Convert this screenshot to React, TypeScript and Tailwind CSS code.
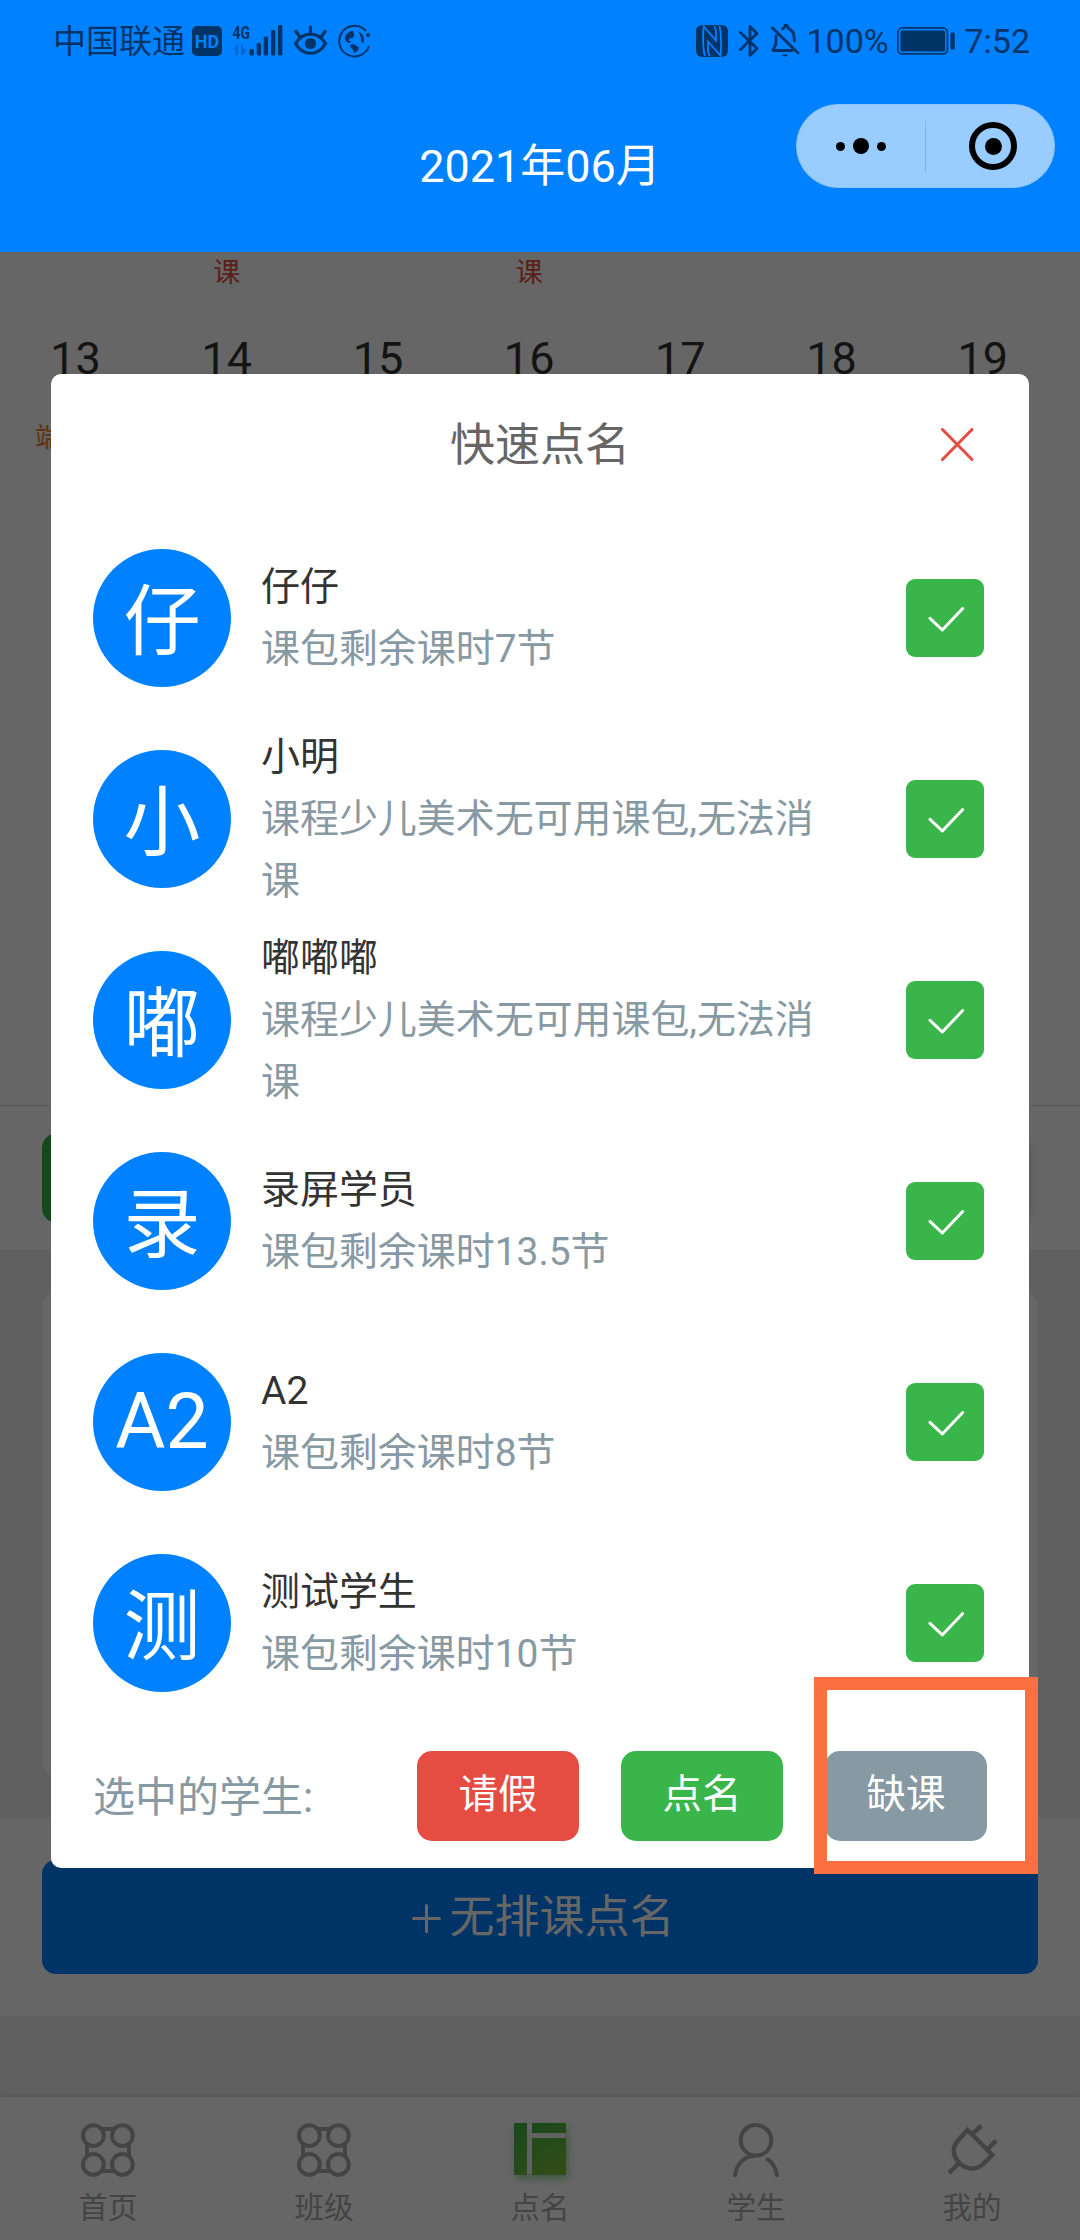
import { useState, type ReactNode } from "react";
import clsx from "clsx";

interface Student {
  id: number;
  avatar: string;
  name: string;
  note: string;
}

const students: Student[] = [
  { id: 1, avatar: "仔", name: "仔仔", note: "课包剩余课时7节" },
  { id: 2, avatar: "小", name: "小明", note: "课程少儿美术无可用课包,无法消课" },
  { id: 3, avatar: "嘟", name: "嘟嘟嘟", note: "课程少儿美术无可用课包,无法消课" },
  { id: 4, avatar: "录", name: "录屏学员", note: "课包剩余课时13.5节" },
  { id: 5, avatar: "A2", name: "A2", note: "课包剩余课时8节" },
  { id: 6, avatar: "测", name: "测试学生", note: "课包剩余课时10节" },
];

const days = [
  { day: 13, above: "", below: "端午节" },
  { day: 14, above: "课", below: "" },
  { day: 15, above: "", below: "" },
  { day: 16, above: "课", below: "" },
  { day: 17, above: "", below: "" },
  { day: 18, above: "", below: "" },
  { day: 19, above: "", below: "" },
];

function StatusBar() {
  return (
    <div className="flex h-[82px] items-center pl-[53px] pr-[50px] text-[#003366]">
      <span className="pt-[2px] text-[33px] leading-[40px]">中国联通</span>
      <span className="ml-[7px] flex h-[30px] w-[30px] items-center justify-center rounded-[5px] bg-[#003366] text-[18px] font-bold text-[#0081ff]">
        HD
      </span>
      <svg className="ml-[10px] overflow-visible" width="52" height="42" viewBox="232 20 52 42" fill="currentColor">
        <text x="232.5" y="38.5" fontSize="19" fontWeight="700" textLength="17.5" lengthAdjust="spacingAndGlyphs">
          4G
        </text>
        <path d="M233 50l5-6v11h-2.500v-5zM241 44h2v5h4.500l-5 6H241z" opacity="0.3" />
        <rect x="249.500" y="49" width="4.500" height="6.500" rx="1.500" />
        <rect x="256.700" y="43" width="4.300" height="12.500" rx="1.500" />
        <rect x="263.700" y="36.500" width="4.300" height="19" rx="1.500" />
        <rect x="271" y="30" width="4.300" height="25.500" rx="1.500" />
        <rect x="278" y="25" width="4.300" height="30.500" rx="1.500" />
      </svg>
      <svg className="ml-[10px]" width="34" height="34" viewBox="294 24 34 34" fill="none" stroke="currentColor" strokeWidth="3.200" strokeLinecap="round">
        <path d="M295.500 43.500C303 31 318 31 325.500 43.500C318 56.500 303 56.500 295.500 43.500Z" />
        <path d="M310.500 27v6M296 31.500l3.500 5M325 31.500l-3.500 5" />
        <circle cx="310.500" cy="43.500" r="5.600" fill="currentColor" stroke="none" />
      </svg>
      <svg className="ml-[9px]" width="34" height="34" viewBox="337 24 34 34" fill="none">
        <path d="M366 31A15.300 15.300 0 1 0 369 46" stroke="currentColor" strokeWidth="1.900" />
        <circle cx="368" cy="35" r="2" fill="currentColor" />
        <path
          d="M353 31c-4 0-7 2.500-8 6.500-.5 2 1 3 1.500 4.500l3 1 1.500-2h-2c-.5-2 .5-3 2-3l1 1c1-2 1.500-2.500 2.500-3zM358 31.500c4 1.500 6.500 5 6 9.500-.5 2-1.500 2.500-2.500 1-.5-4-1-8-3.500-10.500zM350 45c1.500-1.500 3.500-1.300 5 0l3.500 2c.5 3-1.500 5-4.500 6-1-1-.5-3-1.500-4s-2.500-2-2.500-4z"
          fill="currentColor"
        />
      </svg>
      <div className="flex-1" />
      <svg width="32" height="32" viewBox="0 0 32 32" fill="none">
        <rect width="32" height="32" rx="6" fill="currentColor" />
        <path d="M9 31C7 26 6.500 10 7.800 1.500L20 15.500V7c0-2.500-.7-4.500-1.800-6M23.200 1c2 5 2.500 21 1.200 29.500L12 16.500V25c0 2.500.7 4.500 1.800 6" stroke="#0081ff" strokeWidth="1.800" />
      </svg>
      <svg className="ml-[11px]" width="20" height="34" viewBox="0 0 20 34" fill="none" stroke="currentColor" strokeWidth="2.800" strokeLinejoin="round" strokeLinecap="round">
        <path d="M1.500 8.500L18 24.500L11 31.500V2.500L18 9.500L1.500 25.500" />
      </svg>
      <svg className="ml-[12px]" width="30" height="34" viewBox="772 24 30 34" fill="none" stroke="currentColor" strokeWidth="2.800" strokeLinecap="round">
        <path d="M773.500 28L799 53M774 50.500H793M777 36v8l-3 6M783.500 29c2-1.500 3-3 2.800-3.700 3-.5 2 2.500 4 3.700 4 2 5 5 5 12" />
        <path d="M783 54.500h6c-1 2.500-5 2.500-6 0z" fill="currentColor" stroke="none" />
      </svg>
      <span className="ml-[5px] w-[82px] text-[34px] leading-[40px]">100%</span>
      <svg className="ml-[9px]" width="59" height="28" viewBox="0 0 59 28" fill="none">
        <rect x="0.900" y="0.900" width="49.500" height="26" rx="4.500" stroke="currentColor" strokeWidth="1.600" />
        <rect x="3.500" y="3.500" width="44.500" height="21" rx="1.500" fill="currentColor" />
        <rect x="53.500" y="5.500" width="4.300" height="17" rx="1.500" fill="currentColor" />
      </svg>
      <span className="ml-[8px] text-[34px] leading-[40px]">7:52</span>
    </div>
  );
}

function Capsule() {
  return (
    <div className="absolute right-[25px] top-[104px] flex h-[84px] w-[259px] items-center rounded-full border border-[#8cc4fa] bg-[#99cdff]">
      <div className="flex w-[128px] items-center justify-center gap-2">
        <span className="h-[9px] w-[9px] rounded-full bg-black" />
        <span className="h-4 w-4 rounded-full bg-black" />
        <span className="h-[9px] w-[9px] rounded-full bg-black" />
      </div>
      <div className="h-[51px] w-px bg-[#7ab5ee]" />
      <div className="flex flex-1 items-center justify-center pl-[6px]">
        <span className="flex h-12 w-12 items-center justify-center rounded-full border-[6px] border-black">
          <span className="h-[17px] w-[17px] rounded-full bg-black" />
        </span>
      </div>
    </div>
  );
}

function DroneIcon() {
  return (
    <svg width="54" height="54" viewBox="0 0 54 54" fill="none" stroke="#aaaaaa" strokeWidth="4">
      <circle cx="12.400" cy="12.600" r="10.400" />
      <circle cx="41.400" cy="12.600" r="10.400" />
      <circle cx="12.400" cy="41.400" r="10.400" />
      <circle cx="41.400" cy="41.400" r="10.400" />
      <path d="M21 6h12M21 48h12M6 21v12M48 21v12" />
    </svg>
  );
}

function BookIcon() {
  return (
    <svg width="72" height="72" viewBox="-10 -9 72 72" className="drop-shadow-[2px_4px_4px_rgba(57,181,74,0.5)]">
      <defs>
        <linearGradient id="book" x1="0" y1="0" x2="30" y2="56" gradientUnits="userSpaceOnUse">
          <stop offset="0" stopColor="#39b54a" />
          <stop offset="1" stopColor="#7fbf3a" />
        </linearGradient>
      </defs>
      <rect x="1" y="1" width="50" height="50" fill="#ffffff" opacity="0.800" />
      <path d="M1 0H13V52H1Q0 52 0 51V1Q0 0 1 0ZM18 0H51Q52 0 52 1V10H18ZM18 15H52V51Q52 52 51 52H18Z" fill="url(#book)" />
    </svg>
  );
}

function PersonIcon() {
  return (
    <svg width="54" height="54" viewBox="729 2123 54 54" fill="none" stroke="#aaaaaa" strokeWidth="4" strokeLinecap="round">
      <circle cx="756" cy="2140.300" r="15.300" />
      <path d="M735 2175C737 2163 745 2156 754 2156M767.500 2159.300C772.500 2162.500 775.500 2167 777 2175" />
    </svg>
  );
}

function PlugIcon() {
  return (
    <svg width="54" height="54" viewBox="945 2123 54 54" fill="none" stroke="#aaaaaa" strokeWidth="4.500">
      <path d="M967.500 2130L957.500 2141C952.500 2147 952.500 2154.500 958 2161.500C964.500 2169 974 2170.500 981.500 2165.500L992.300 2155Z" />
      <path d="M971.500 2134.500L981.300 2125.800M986.500 2150.500L996 2140.500M958.500 2163.500L949 2173" />
    </svg>
  );
}

const tabs: { label: string; icon: ReactNode }[] = [
  { label: "首页", icon: <DroneIcon /> },
  { label: "班级", icon: <DroneIcon /> },
  { label: "点名", icon: <BookIcon /> },
  { label: "学生", icon: <PersonIcon /> },
  { label: "我的", icon: <PlugIcon /> },
];

function PageContent() {
  return (
    <div className="flex h-[1988px] flex-col bg-[#f1f1f1]">
      <div className="h-[853px] shrink-0 bg-white">
        <div className="flex">
          {days.map((d) => (
            <div key={d.day} className="flex w-[151.2px] flex-col items-center">
              <span className="mt-[1px] h-[40px] text-[27px] leading-[40px] text-[#e54d42]">{d.above}</span>
              <span className="mt-[36px] text-[45px] leading-[60px] text-[#333333]">{d.day}</span>
              <span className="mt-[29px] h-[40px] text-[27px] leading-[40px] whitespace-nowrap text-[#f37b1d]">{d.below}</span>
            </div>
          ))}
        </div>
      </div>
      <div className="flex h-[145px] shrink-0 justify-between border-t border-[#e2e2e2] bg-white pt-[27px] pr-[52px] pl-[42px]">
        <div className="h-[90px] w-[162px] rounded-[15px] bg-[#39b54a]" />
        <div className="h-[90px] w-[162px] rounded-[15px] bg-white shadow-[3px_3px_6px_rgba(28,90,37,0.2)]" />
      </div>
      <div className="flex h-[568px] shrink-0 px-[42px] pt-[42px] pb-[42px]">
        <div className="flex-1 rounded-[15px] bg-white" />
      </div>
      <div className="h-[198px] shrink-0 bg-white px-[42px] pt-[42px]">
        <button className="flex h-[114px] w-full items-center justify-center gap-[8px] rounded-[14px] bg-[#0081ff] pt-[2px] pl-[7px] text-[45px] leading-[60px] text-white">
          <svg width="29" height="29" viewBox="0 0 29 29" stroke="currentColor" strokeWidth="3" strokeLinecap="round">
            <path d="M1.500 14.500h26M14.500 1.500v26" />
          </svg>
          <span>无排课点名</span>
        </button>
      </div>
      <div className="flex-1" />
      <nav className="flex h-[143px] shrink-0 bg-white shadow-[0_-1px_8px_rgba(0,0,0,0.12)]">
        {tabs.map((tab) => (
          <div key={tab.label} className="flex flex-1 flex-col items-center pt-[26px]">
            <div className="flex h-[54px] w-[54px] items-center justify-center">
              <div className="shrink-0">{tab.icon}</div>
            </div>
            <span className="mt-[11px] text-[29.5px] leading-[40px] text-[#aaaaaa]">{tab.label}</span>
          </div>
        ))}
      </nav>
    </div>
  );
}

function StudentRow({ student, checked, onToggle }: { student: Student; checked: boolean; onToggle: () => void }) {
  const isLatin = /^[\x20-\x7e]+$/.test(student.avatar);
  return (
    <div className="flex h-[201px] items-center pl-[42px] pr-[45px]">
      <div
        className={clsx(
          "flex h-[138px] w-[138px] shrink-0 items-center justify-center rounded-full bg-[#0081ff] text-[77px] leading-[100px] text-white",
          !isLatin && "pt-[10px]"
        )}
      >
        {student.avatar}
      </div>
      <div className="ml-[30px] w-[560px] text-[38.95px] leading-[62px]">
        <div className="text-[#333333]">{student.name}</div>
        <div className="text-[#8799a3]">{student.note}</div>
      </div>
      <button
        onClick={onToggle}
        className={clsx(
          "ml-auto flex h-[78px] w-[78px] items-center justify-center rounded-[9px]",
          checked ? "bg-[#39b54a]" : "border-2 border-[#8799a3]"
        )}
      >
        <svg width="78" height="78" viewBox="0 0 78 78" fill="none" stroke="white" strokeWidth="3" strokeLinecap="round" strokeLinejoin="round">
          <path d="M24 39.300L36.300 51L56.700 29.500" />
        </svg>
      </button>
    </div>
  );
}

function RollCallDialog() {
  const [selected, setSelected] = useState(students.map((s) => s.id));

  const toggle = (id: number) =>
    setSelected((prev) => (prev.includes(id) ? prev.filter((x) => x !== id) : [...prev, id]));

  return (
    <div className="relative flex h-[1494px] w-[978px] flex-col rounded-[10px] bg-white">
      <div className="grid h-[143px] shrink-0 grid-cols-[1fr_auto_1fr] items-center px-[55px]">
        <span />
        <h2 className="text-[45px] leading-[60px] text-[#666666]">快速点名</h2>
        <svg className="mb-[2px] justify-self-end" width="33" height="33" viewBox="0 0 33 33" stroke="#e54d42" strokeWidth="3" strokeLinecap="round">
          <path d="M1.500 1.500L31 31.500M31 1.500L1.500 31.500" />
        </svg>
      </div>
      {students.map((s) => (
        <StudentRow key={s.id} student={s} checked={selected.includes(s.id)} onToggle={() => toggle(s.id)} />
      ))}
      <div className="flex flex-1 items-center pl-[42px] pr-[42px] text-white">
        <span className="mr-auto pt-[5px] text-[42px] leading-[60px] text-[#8799a3]">选中的学生:</span>
        <div className="flex gap-[42px] text-[39.5px] leading-[60px]">
          <button className="h-[90px] w-[162px] rounded-[15px] bg-[#e54d42] pb-[2px]">请假</button>
          <button className="h-[90px] w-[162px] rounded-[15px] bg-[#39b54a] pb-[2px]">点名</button>
          <button className="h-[90px] w-[162px] rounded-[15px] bg-[#8799a3] pb-[2px]">缺课</button>
        </div>
      </div>
      <div className="pointer-events-none absolute -right-[9px] -bottom-[6px] h-[197px] w-[224px] border-[13px] border-[#fb7041]" />
    </div>
  );
}

export default function App() {
  return (
    <div className="relative h-[2240px] w-[1080px] overflow-hidden font-['Roboto','Noto_Sans_CJK_SC',sans-serif]">
      <header className="relative h-[252px] bg-[#0081ff]">
        <StatusBar />
        <h1 className="mt-[55px] text-center text-[45px] leading-[60px] text-white">2021年06月</h1>
        <Capsule />
      </header>
      <PageContent />
      <div className="absolute inset-x-0 top-[252px] bottom-0 flex items-start justify-center bg-black/60 pt-[122px]">
        <RollCallDialog />
      </div>
    </div>
  );
}
